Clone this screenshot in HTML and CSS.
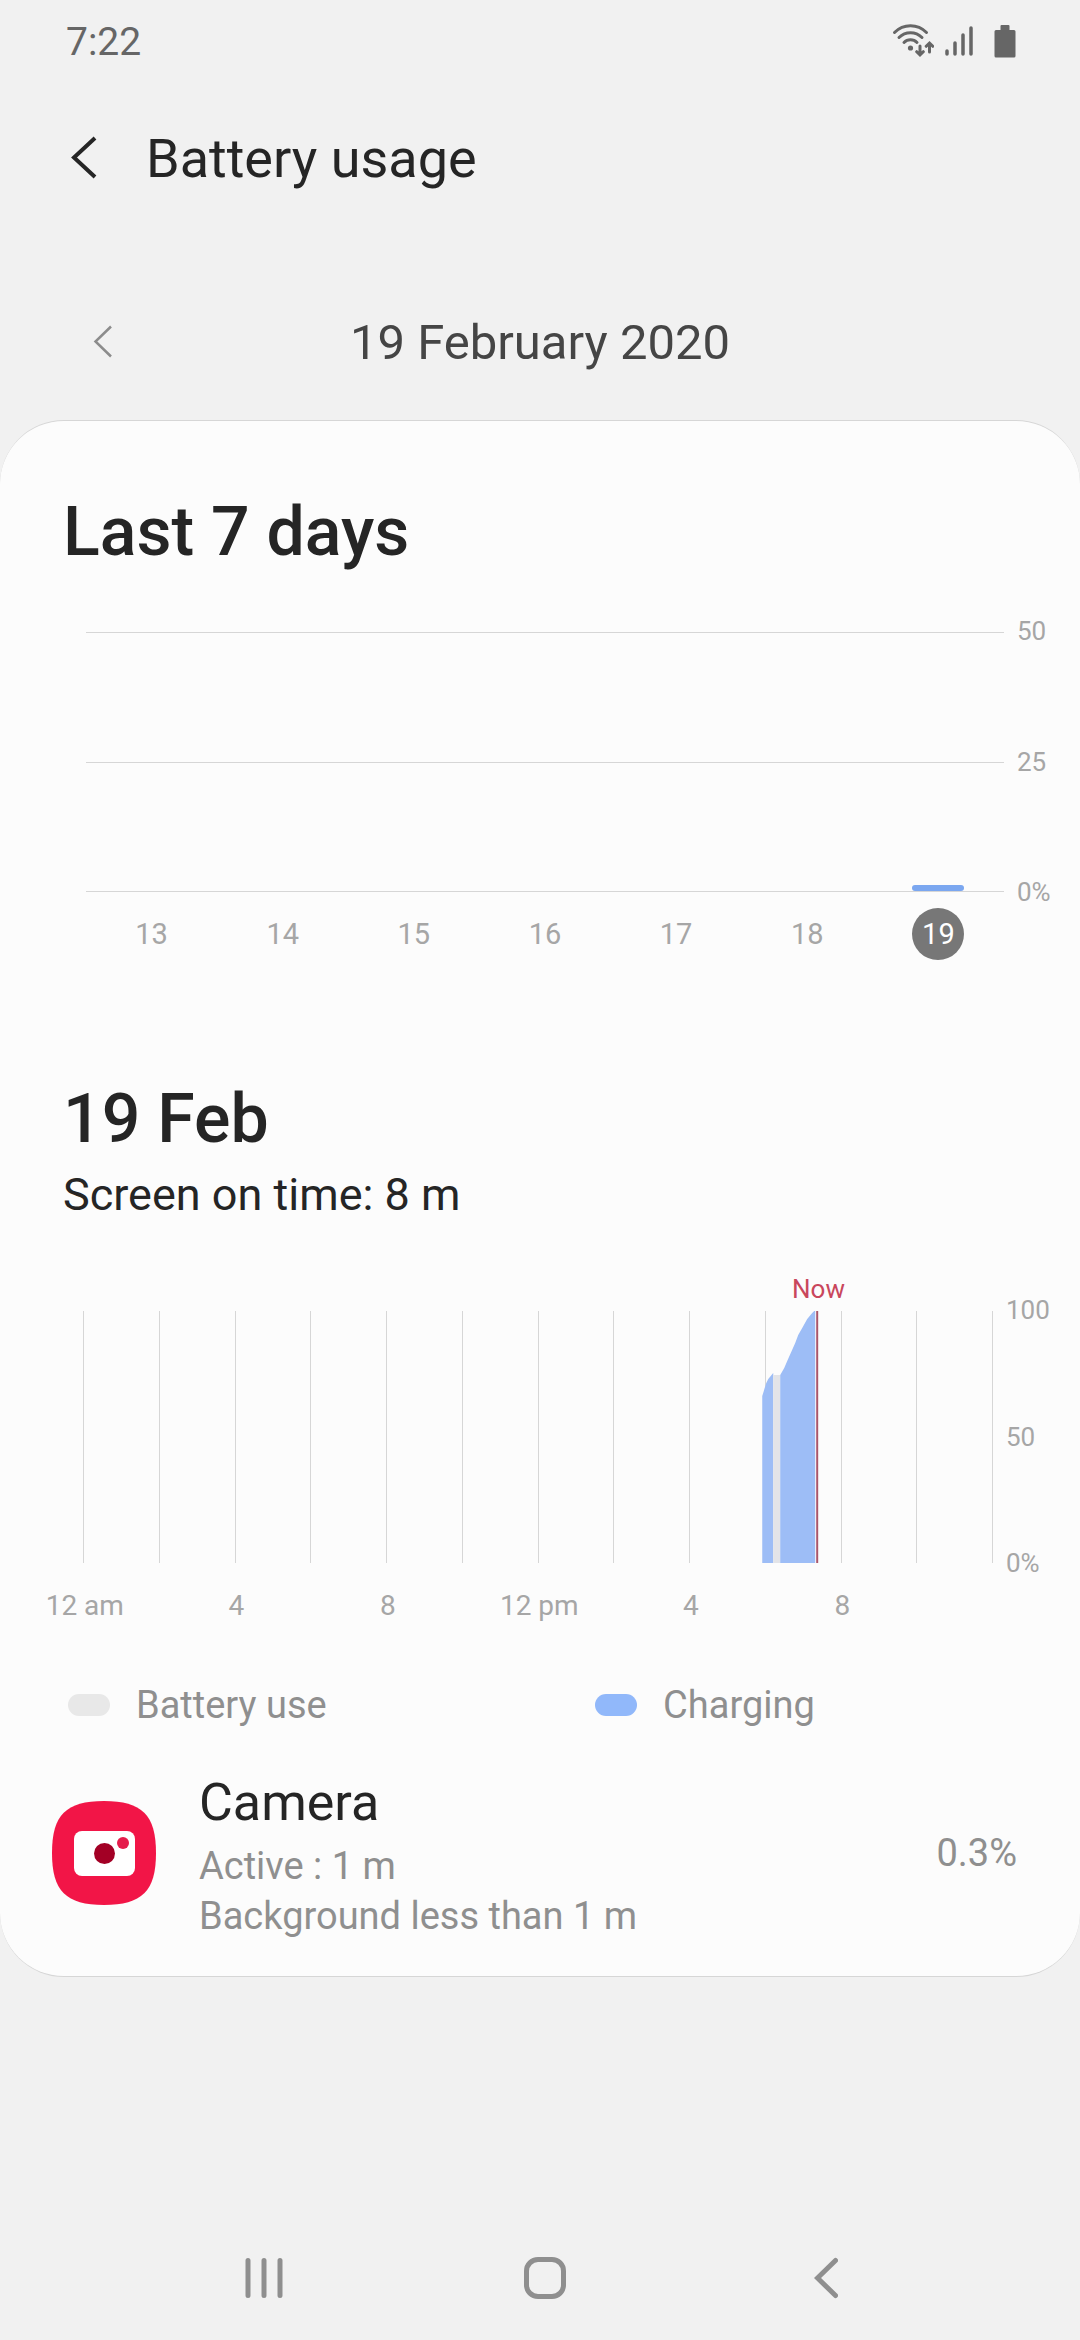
FILE: index.html
```html
<!DOCTYPE html>
<html lang="en-GB">
<head>
<meta charset="utf-8">
<meta name="viewport" content="width=device-width, initial-scale=1">
<title>Battery usage</title>
<link rel="stylesheet" href="styles.css">
</head>
<body>
<div class="status-bar">
  <time class="clock">7:22</time>
  <div class="status-icons">
    <svg width="42" height="36" viewBox="0 3 42 36" role="img" aria-label="Wi-Fi">
      <g fill="none" stroke="#666" stroke-width="3" stroke-linecap="round">
        <path d="M2.500 11.500C11.500 2.500 25.500 2.500 34.500 11.500"/>
        <path d="M7 16.500C13.500 10 23.500 10 30 16.500"/>
        <path d="M12 21.500C15.500 17.700 21.500 17.700 25 21.500"/>
        <path d="M28 25v8.500M24.700 30.700L28 34l3.300-3.300M37.500 31V22.500M34.200 25.300L37.500 22l3.300 3.300"/>
      </g>
      <circle cx="18.500" cy="27" r="2.600" fill="#666"/>
    </svg>
    <svg class="signal" width="28" height="32" viewBox="0 1 28 32" role="img" aria-label="Mobile signal">
      <path d="M2 26v3M10 18v11M18 10v19M26 3v26" fill="none" stroke="#666" stroke-width="3.500" stroke-linecap="round"/>
    </svg>
    <svg width="22" height="34" viewBox="0 1 22 34" role="img" aria-label="Battery">
      <path d="M7.500 1h7q1 0 1 1v4H20q1.500 0 1.500 1.500V32q0 1.500-1.500 1.500H2Q.5 33.500.5 32V7.500Q.5 6 2 6h4.500V2q0-1 1-1z" fill="#666"/>
    </svg>
  </div>
</div>

<header class="app-bar">
  <button class="icon-button" type="button" aria-label="Navigate up">
    <svg width="28" height="44" viewBox="0 0 28 44"><path d="M25 2L4 21.500 25 41" fill="none" stroke="#252525" stroke-width="4"/></svg>
  </button>
  <h1 class="title">Battery usage</h1>
</header>

<nav class="date-picker" aria-label="Date">
  <button class="icon-button" type="button" aria-label="Previous day">
    <svg width="20" height="34" viewBox="0 0 20 34"><path d="M18 1.500L2.500 16.500 18 31.500" fill="none" stroke="#8c8c8c" stroke-width="2.500"/></svg>
  </button>
  <span class="date">19 February 2020</span>
</nav>

<main class="card">
  <section>
    <h2 class="heading">Last 7 days</h2>
    <div class="chart week-chart">
      <div class="plot week-plot">
        <div class="band"></div>
        <div class="band"></div>
        <div class="bars"><span class="bar"></span></div>
      </div>
      <div class="axis"><span>50</span><span>25</span><span>0%</span></div>
    </div>
    <div class="days">
      <button class="day" type="button">13</button>
      <button class="day" type="button">14</button>
      <button class="day" type="button">15</button>
      <button class="day" type="button">16</button>
      <button class="day" type="button">17</button>
      <button class="day" type="button">18</button>
      <button class="day selected" type="button" aria-pressed="true">19</button>
    </div>
  </section>

  <section class="day-section">
    <h2 class="heading">19 Feb</h2>
    <p class="screen-time">Screen on time: 8 m</p>
    <div class="chart day-chart">
      <div class="plot day-plot">
        <i></i><i></i><i></i><i></i><i></i><i></i><i></i><i></i><i></i><i></i><i></i><i></i>
        <svg class="level" viewBox="0 0 910 252" preserveAspectRatio="none" role="img" aria-label="Battery level">
          <path d="M680 252V85L684 72 686 68 691 62V252z" fill="#9dbdf6"/>
          <path d="M691 252V64H698V252z" fill="#e3e4e8"/>
          <path d="M698 252V64L702 57 705 50 713 32 716 24 720 17 725 8 730 2 732 0H733V252z" fill="#9dbdf6"/>
          <path d="M734 0h2V252h-2z" fill="#a9566b"/>
        </svg>
        <span class="now">Now</span>
      </div>
      <div class="axis"><span>100</span><span>50</span><span>0%</span></div>
    </div>
    <div class="hours">
      <span>12 am</span><span>4</span><span>8</span><span>12 pm</span><span>4</span><span>8</span>
    </div>
    <ul class="legend">
      <li><span class="pill"></span>Battery use</li>
      <li><span class="pill charging"></span>Charging</li>
    </ul>
  </section>

  <a class="app" href="#camera">
    <svg width="104" height="104" viewBox="0 0 104 104" aria-hidden="true">
      <path d="M52 0C90 0 104 14 104 52S90 104 52 104 0 90 0 52 14 0 52 0z" fill="#f21547"/>
      <rect x="22" y="30" width="61" height="45" rx="8" fill="#fff"/>
      <circle cx="52.500" cy="52.500" r="10.500" fill="#a30025"/>
      <circle cx="71" cy="42" r="6" fill="#e51c4b"/>
    </svg>
    <span class="app-text">
      <span class="app-name">Camera</span>
      <span class="app-detail">Active : 1 m</span>
      <span class="app-detail">Background less than 1 m</span>
    </span>
    <span class="app-share">0.3%</span>
  </a>
</main>

<nav class="system-nav" aria-label="System">
  <button class="icon-button" type="button" aria-label="Recents">
    <svg width="40" height="42" viewBox="0 0 40 42"><path d="M4 3.500v35M20 3.500v35M36 3.500v35" fill="none" stroke="#8f8f8f" stroke-width="5" stroke-linecap="round"/></svg>
  </button>
  <button class="icon-button" type="button" aria-label="Home">
    <svg width="42" height="42" viewBox="0 0 42 42"><rect x="2.500" y="2.500" width="37" height="37" rx="11.500" fill="none" stroke="#8f8f8f" stroke-width="5"/></svg>
  </button>
  <button class="icon-button" type="button" aria-label="Back">
    <svg width="24" height="42" viewBox="0 0 24 42"><path d="M21.500 3.500L3.500 21l18 17.500" fill="none" stroke="#8f8f8f" stroke-width="5" stroke-linecap="round"/></svg>
  </button>
</nav>
</body>
</html>
```
FILE: styles.css
```css
* {
  box-sizing: border-box;
}

body {
  display: flex;
  flex-direction: column;
  min-height: 100vh;
  margin: 0;
  background: #f1f1f1;
  color: #252525;
  font-family: Roboto, "Noto Sans", sans-serif;
}

h1, h2, p, ul {
  margin: 0;
  padding: 0;
}

svg {
  display: block;
  flex: none;
}

button {
  padding: 0;
  border: 0;
  background: none;
  font: inherit;
  color: inherit;
}

.icon-button {
  display: flex;
  align-items: center;
  justify-content: center;
}

.status-bar {
  display: flex;
  align-items: center;
  justify-content: space-between;
  height: 84px;
  padding: 0 64px 0 66px;
}

.clock {
  color: #666;
  font-size: 39px;
}

.status-icons {
  display: flex;
  align-items: center;
  gap: 11px;
}

.signal {
  margin-right: 10px;
}

.app-bar {
  display: flex;
  align-items: center;
  gap: 48px;
  height: 148px;
  padding: 0 70px;
}

.title {
  font-size: 54px;
  font-weight: 400;
}

.date-picker {
  display: grid;
  grid-template-columns: 40px 1fr 40px;
  align-items: center;
  height: 156px;
  margin-top: 32px;
  padding: 0 83px;
}

.date {
  color: #454545;
  font-size: 49px;
  text-align: center;
}

.card {
  padding: 71px 0 35px;
  border: 1px solid #d6d6d6;
  border-width: 1px 0;
  border-radius: 64px;
  background: #fcfcfc;
}

.heading {
  padding: 0 63px;
  font-size: 68px;
  font-weight: 500;
  line-height: 80px;
}

.chart {
  display: flex;
}

.week-chart {
  margin-top: 44px;
  padding-left: 86px;
}

.plot {
  position: relative;
  flex: 1;
  margin: 16px 0;
}

.week-plot {
  display: grid;
  grid-template-rows: 1fr 1fr;
  height: 260px;
  border-bottom: 1px solid #d6d6d6;
}

.band {
  border-top: 1px solid #d6d6d6;
}

.bars {
  position: absolute;
  inset: 0;
  display: grid;
  grid-template-columns: repeat(7, 1fr);
  align-items: end;
  justify-items: center;
}

.bar {
  grid-column: 7;
  width: 52px;
  height: 6px;
  border-radius: 3px;
  background: #7ba7f0;
}

.axis {
  display: flex;
  flex-direction: column;
  justify-content: space-between;
  width: 76px;
  padding-left: 13px;
  color: #a6a6a6;
  font-size: 26px;
  line-height: 31px;
}

.days {
  display: grid;
  grid-template-columns: repeat(7, 1fr);
  justify-items: center;
  padding: 0 76px 0 86px;
}

.day {
  width: 52px;
  height: 52px;
  border-radius: 50%;
  color: #a6a6a6;
  font-size: 29px;
}

.selected {
  background: #777;
  color: #fff;
}

.day-section {
  margin-top: 119px;
}

.screen-time {
  margin-top: 8px;
  padding: 0 63px;
  font-size: 45px;
  line-height: 56px;
}

.day-chart {
  margin-top: 72px;
  padding-left: 83px;
}

.day-plot {
  display: grid;
  grid-template-columns: repeat(12, 1fr);
  height: 252px;
  border-right: 1px solid #d6d6d6;
}

.day-plot i {
  border-left: 1px solid #d6d6d6;
}

.level {
  position: absolute;
  inset: 0;
  width: 100%;
  height: 100%;
}

.now {
  position: absolute;
  bottom: 100%;
  left: 78%;
  padding-bottom: 6px;
  color: #c9475c;
  font-size: 26px;
  line-height: 31px;
}

.day-chart .axis {
  width: 87px;
}

.hours {
  display: grid;
  grid-template-columns: repeat(6, 1fr);
  margin-top: 7px;
  padding: 0 162px 0 9px;
  color: #a6a6a6;
  font-size: 28px;
  line-height: 40px;
  text-align: center;
}

.legend {
  display: grid;
  grid-template-columns: 25fr 23fr;
  margin-top: 55px;
  padding-left: 68px;
  color: #8f8f8f;
  font-size: 38px;
  line-height: 48px;
  list-style: none;
}

.legend li {
  display: flex;
  align-items: center;
  gap: 26px;
}

.pill {
  width: 42px;
  height: 22px;
  border-radius: 11px;
  background: #e8e8e8;
}

.charging {
  background: #91b8fa;
}

.app {
  display: flex;
  align-items: center;
  gap: 43px;
  margin-top: 36px;
  padding: 0 63px 0 52px;
  color: #8f8f8f;
  font-size: 38px;
  line-height: 50px;
  text-decoration: none;
}

.app-text {
  display: flex;
  flex: 1;
  flex-direction: column;
}

.app-name {
  color: #252525;
  font-size: 52px;
  line-height: 76px;
}

.system-nav {
  display: grid;
  grid-template-columns: repeat(3, 1fr);
  height: 124px;
  margin-top: auto;
  padding: 0 114px 0 124px;
}
```
